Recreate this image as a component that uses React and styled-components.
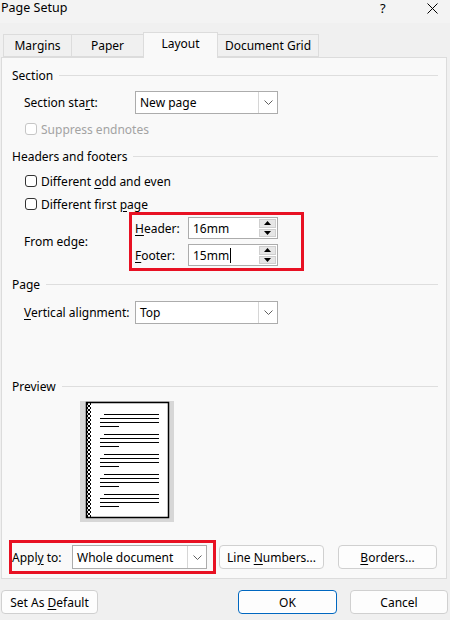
import React from "react";
import styled, { createGlobalStyle } from "styled-components";

const Global = createGlobalStyle`
  html, body { margin: 0; padding: 0; background: #f0f0f0; }
  * { box-sizing: border-box; }
`;

const FONT = `"Noto Sans", "Open Sans", "Liberation Sans", sans-serif`;

const Window = styled.div`
  width: 450px;
  height: 620px;
  background: #f0f0f0;
  font-family: ${FONT};
  font-size: 12px;
  color: #000;
  display: flex;
  flex-direction: column;
  overflow: hidden;
`;

const TitleBar = styled.div`
  height: 23px;
  background: #f3f3f3;
  display: flex;
  align-items: flex-start;
  padding: 0 0 0 1px;
`;

const Title = styled.div`
  flex: 1;
  line-height: 16px;
  font-size: 12.5px;
`;

const HelpGlyph = styled.div`
  width: 12px;
  line-height: 16px;
  font-size: 13px;
  margin-right: 35px;
`;

const CloseGlyph = styled.svg`
  width: 11px;
  height: 11px;
  margin: 3px 12px 0 0;
`;

const TabStrip = styled.div`
  display: flex;
  align-items: flex-end;
  padding: 9px 0 0 3px;
  height: 34px;
  position: relative;
  z-index: 1;
`;

const Tab = styled.div`
  width: ${(p) => p.$w}px;
  height: ${(p) => (p.$active ? 26 : 23)}px;
  margin-left: -1px;
  margin-bottom: ${(p) => (p.$active ? -1 : 0)}px;
  border: 1px solid #dcdcdc;
  border-bottom: ${(p) => (p.$active ? "none" : "1px solid #dcdcdc")};
  background: ${(p) => (p.$active ? "#f9f9f9" : "#f0f0f0")};
  display: flex;
  align-items: center;
  justify-content: center;
  padding-bottom: ${(p) => (p.$active ? 4 : 0)}px;
  &:first-child { margin-left: 0; }
`;

const Panel = styled.div`
  height: 522px;
  margin: 0 3px 0 1px;
  background: #f9f9f9;
  border: 1px solid #dcdcdc;
  padding: 9px 8px 0 10px;
  display: flex;
  flex-direction: column;
`;

const Heading = styled.div`
  display: flex;
  align-items: center;
  height: 16px;
  margin-top: ${(p) => p.$top || 0}px;
  &::after {
    content: "";
    flex: 1;
    height: 1px;
    background: #dedede;
    margin-left: 6px;
  }
`;

const Row = styled.div`
  display: flex;
  align-items: center;
  padding-left: 12px;
  margin-top: ${(p) => p.$top || 0}px;
`;

const Label = styled.div`
  width: ${(p) => p.$w || 111}px;
  flex: none;
  white-space: nowrap;
  color: ${(p) => (p.$disabled ? "#a3a3a3" : "#000")};
`;

const Key = styled.span`
  text-decoration: underline;
  text-underline-offset: 2px;
`;

const Select = styled.div`
  width: ${(p) => p.$w}px;
  height: ${(p) => p.$h || 23}px;
  border: 1px solid #acacac;
  background: #fff;
  display: flex;
  align-items: center;
`;

const SelectText = styled.div`
  flex: 1;
  padding-left: 4px;
  white-space: nowrap;
`;

const DropButton = styled.div`
  width: 19px;
  align-self: stretch;
  border-left: 1px solid #d6d6d6;
  display: flex;
  align-items: center;
  justify-content: center;
`;

const Chevron = () => (
  <svg width="9" height="5" viewBox="0 0 9 5">
    <path d="M0.5 0.5 L4.5 4.5 L8.5 0.5" fill="none" stroke="#606060" strokeWidth="1" />
  </svg>
);

const CheckRow = styled.div`
  display: flex;
  align-items: center;
  height: 16px;
  padding-left: 13px;
  margin-top: ${(p) => p.$top || 0}px;
  color: ${(p) => (p.$disabled ? "#a3a3a3" : "#000")};
  white-space: pre;
`;

const Box = styled.span`
  width: 12px;
  height: 12px;
  border: 1px solid ${(p) => (p.$disabled ? "#c6c6c6" : "#333")};
  border-radius: 3px;
  background: #fff;
  margin-right: 4px;
  flex: none;
`;

const EdgeRow = styled.div`
  display: flex;
  align-items: center;
  padding-left: 12px;
`;

const RedFrame = styled.div`
  border: 3px solid #e81123;
  padding: ${(p) => p.$pad};
  margin-left: ${(p) => p.$left || 0}px;
  display: flex;
  flex-direction: ${(p) => p.$dir || "row"};
  gap: ${(p) => p.$gap || 0}px;
  align-items: ${(p) => (p.$dir === "column" ? "stretch" : "center")};
`;

const SpinRow = styled.div`
  display: flex;
  align-items: center;
  height: 22px;
`;

const SpinLabel = styled.div`
  width: 53px;
`;

const SpinBox = styled.div`
  width: 90px;
  height: 22px;
  border: 1px solid #acacac;
  background: #fff;
  display: flex;
  align-items: center;
`;

const SpinText = styled.div`
  flex: 1;
  padding-left: 4px;
  display: flex;
  align-items: center;
`;

const Caret = styled.span`
  width: 1px;
  height: 15px;
  background: #000;
  margin-left: 1px;
`;

const Arrows = styled.div`
  width: 18px;
  align-self: stretch;
  padding: 1px 1px 1px 0;
  display: flex;
  flex-direction: column;
  gap: 1px;
`;

const ArrowBtn = styled.div`
  flex: 1;
  background: #e6e6e6;
  border: 1px solid #cfcfcf;
  display: flex;
  align-items: center;
  justify-content: center;
`;

const Tri = ({ up }) => (
  <svg width="7" height="4" viewBox="0 0 7 4">
    <path d={up ? "M0 4 L3.5 0 L7 4 Z" : "M0 0 L3.5 4 L7 0 Z"} fill="#000" />
  </svg>
);

const PreviewFrame = styled.div`
  margin: 7px 0 0 68px;
  width: 94px;
  height: 121px;
  background: #d7d7d7;
  display: flex;
  align-items: flex-start;
  justify-content: flex-start;
`;

const Spacer = styled.div`
  flex: 1;
`;

const ApplyRow = styled.div`
  display: flex;
  align-items: center;
  margin: 0 0 4px 0;
`;

const Button = styled.div`
  width: ${(p) => p.$w}px;
  height: 24px;
  background: #fdfdfd;
  border: 1px solid ${(p) => (p.$primary ? "#0067c0" : "#d0d0d0")};
  box-shadow: ${(p) => (p.$primary ? "inset 0 0 0 1px #ffffff" : "none")};
  border-radius: 4px;
  display: flex;
  align-items: center;
  justify-content: center;
  margin-left: ${(p) => p.$left || 0}px;
  white-space: pre;
`;

const Footer = styled.div`
  display: flex;
  align-items: center;
  margin-top: 11px;
  padding: 0 2px 0 1px;
`;

// Thumbnail of a page: bound left edge, then five blocks of body text.
const PageThumb = () => {
  const blocks = [0, 1, 2, 3, 4];
  return (
    <svg width="94" height="121" viewBox="0 0 94 121">
      <defs>
        <pattern id="bind" width="4" height="4" patternUnits="userSpaceOnUse">
          <rect width="4" height="4" fill="#fff" />
          <rect x="0" y="0" width="2" height="2" fill="#000" />
          <rect x="2" y="2" width="2" height="2" fill="#000" />
        </pattern>
      </defs>
      <rect x="6" y="1" width="83" height="116" fill="#fff" />
      <rect x="7" y="2" width="4" height="114" fill="url(#bind)" />
      <rect x="6.5" y="1.5" width="82" height="115" fill="none" stroke="#000" strokeWidth="1.5" />
      {blocks.map((b) => {
        const y = 13 + b * 20;
        return (
          <g key={b} fill="#000">
            <rect x="24" y={y} width="55" height="1" />
            <rect x="20" y={y + 4} width="59" height="1" />
            <rect x="20" y={y + 8} width="59" height="1" />
            <rect x="20" y={y + 12} width="19" height="1" />
          </g>
        );
      })}
    </svg>
  );
};

export default function App() {
  return (
    <Window>
      <Global />
      <TitleBar>
        <Title>Page Setup</Title>
        <HelpGlyph>?</HelpGlyph>
        <CloseGlyph viewBox="0 0 11 11">
          <path d="M0.5 0.5 L10.5 10.5 M10.5 0.5 L0.5 10.5" stroke="#000" strokeWidth="1" />
        </CloseGlyph>
      </TitleBar>

      <TabStrip>
        <Tab $w={69}>Margins</Tab>
        <Tab $w={73}>Paper</Tab>
        <Tab $w={75} $active>Layout</Tab>
        <Tab $w={102}>Document Grid</Tab>
      </TabStrip>

      <Panel>
        <Heading>Section</Heading>
        <Row $top={8}>
          <Label>
            Section sta<Key>r</Key>t:
          </Label>
          <Select $w={143}>
            <SelectText>New page</SelectText>
            <DropButton>
              <Chevron />
            </DropButton>
          </Select>
        </Row>
        <CheckRow $top={7} $disabled>
          <Box $disabled />
          <span>Suppress endnotes</span>
        </CheckRow>

        <Heading $top={11}>Headers and footers</Heading>
        <CheckRow $top={9}>
          <Box />
          <span>
            Different <Key>o</Key>dd and even
          </span>
        </CheckRow>
        <CheckRow $top={7}>
          <Box />
          <span>
            Different first <Key>p</Key>age
          </span>
        </CheckRow>
        <EdgeRow>
          <Label $w={105}>From edge:</Label>
          <RedFrame $dir="column" $pad="2px 23px 2px 3px" $gap={5}>
            <SpinRow>
              <SpinLabel>
                <Key>H</Key>eader:
              </SpinLabel>
              <SpinBox>
                <SpinText>16mm</SpinText>
                <Arrows>
                  <ArrowBtn><Tri up /></ArrowBtn>
                  <ArrowBtn><Tri /></ArrowBtn>
                </Arrows>
              </SpinBox>
            </SpinRow>
            <SpinRow>
              <SpinLabel>
                <Key>F</Key>ooter:
              </SpinLabel>
              <SpinBox>
                <SpinText>
                  15mm<Caret />
                </SpinText>
                <Arrows>
                  <ArrowBtn><Tri up /></ArrowBtn>
                  <ArrowBtn><Tri /></ArrowBtn>
                </Arrows>
              </SpinBox>
            </SpinRow>
          </RedFrame>
        </EdgeRow>

        <Heading $top={5}>Page</Heading>
        <Row $top={9}>
          <Label>
            <Key>V</Key>ertical alignment:
          </Label>
          <Select $w={143}>
            <SelectText>Top</SelectText>
            <DropButton>
              <Chevron />
            </DropButton>
          </Select>
        </Row>

        <Heading $top={54}>Preview</Heading>
        <PreviewFrame>
          <PageThumb />
        </PreviewFrame>

        <Spacer />

        <ApplyRow>
          <RedFrame $pad="2px 6px 2px 0" $left={-3}>
            <Label $w={60}>
              Appl<Key>y</Key> to:
            </Label>
            <Select $w={135} $h={24}>
              <SelectText>Whole document</SelectText>
              <DropButton>
                <Chevron />
              </DropButton>
            </Select>
          </RedFrame>
          <Button $w={105} $left={3}>
            <span>
              Line <Key>N</Key>umbers...
            </span>
          </Button>
          <Button $w={99} $left={14}>
            <span>
              <Key>B</Key>orders...
            </span>
          </Button>
        </ApplyRow>
      </Panel>

      <Footer>
        <Button $w={97}>
          <span>
            Set As <Key>D</Key>efault
          </span>
        </Button>
        <Spacer />
        <Button $w={99} $primary>OK</Button>
        <Button $w={98} $left={13}>Cancel</Button>
      </Footer>
    </Window>
  );
}
